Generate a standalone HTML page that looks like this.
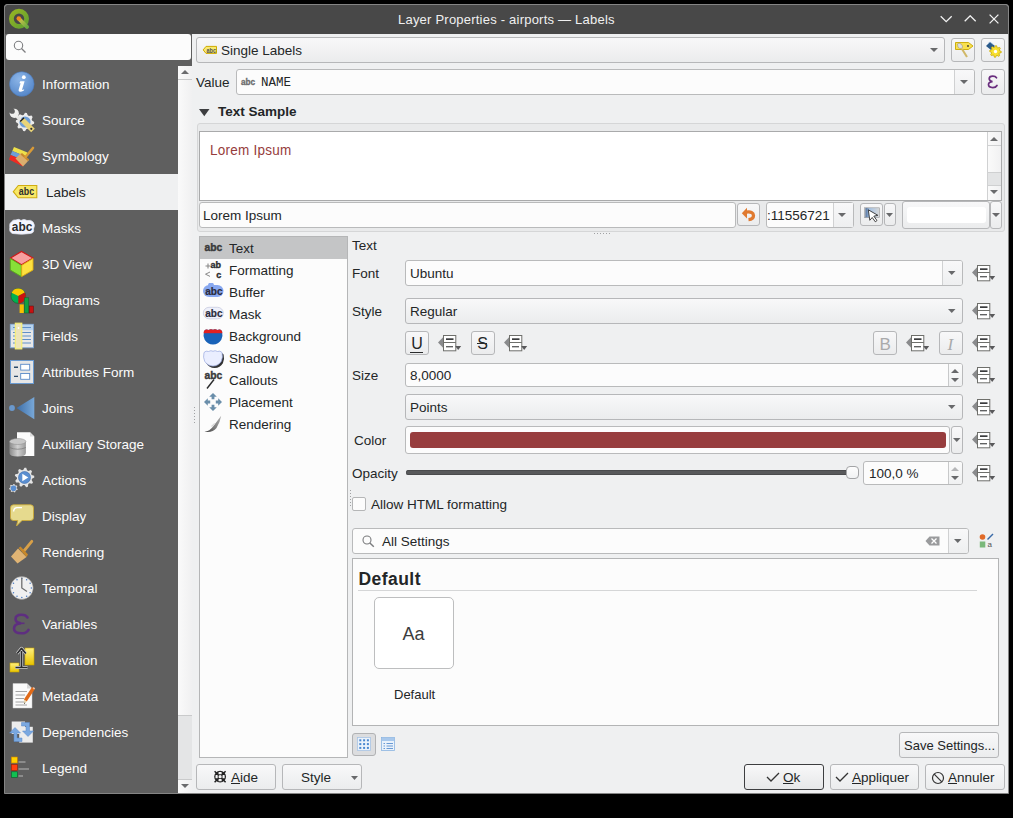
<!DOCTYPE html>
<html><head><meta charset="utf-8">
<style>
*{box-sizing:border-box;margin:0;padding:0}
html,body{width:1013px;height:818px;overflow:hidden;background:#000}
body{position:relative;font-family:"Liberation Sans",sans-serif;color:#232627}
.a{position:absolute}
.t{position:absolute;white-space:nowrap}
svg{display:block}
</style></head><body>
<div class="a" style="left:4px;top:4px;width:1005px;height:790px;background:#eff0f1;border:1px solid #858585;border-radius:3px 3px 0 0"></div>
<div class="a" style="left:5px;top:5px;width:1003px;height:29px;background:#484848;border-radius:2px 2px 0 0"></div>
<div class="t " style="left:398px;top:11.50px;font-size:13.00px;line-height:16px;color:#f0f0f0;font-weight:normal;letter-spacing:0.22px">Layer Properties - airports — Labels</div>
<svg class="a" style="left:940px;top:15px" width="13" height="8" viewBox="0 0 13 8"><path d="M0.7 1.2L6.2 6.7L11.7 1.2" fill="none" stroke="#f2f2f2" stroke-width="1.3"/></svg>
<svg class="a" style="left:964px;top:15px" width="13" height="8" viewBox="0 0 13 8"><path d="M0.7 6.3L6.2 0.8L11.7 6.3" fill="none" stroke="#f2f2f2" stroke-width="1.3"/></svg>
<svg class="a" style="left:989px;top:14px" width="10" height="10" viewBox="0 0 10 10"><path d="M0.6 0.6L9.4 9.4M9.4 0.6L0.6 9.4" fill="none" stroke="#f2f2f2" stroke-width="1.3"/></svg>
<svg class="a" style="left:8px;top:8px" width="22" height="22" viewBox="0 0 22 22"><defs><linearGradient id="gq" x1="0" y1="0" x2="1" y2="1"><stop offset="0" stop-color="#95b524"/><stop offset="1" stop-color="#62a030"/></linearGradient><linearGradient id="gt" x1="0" y1="0" x2="1" y2="1"><stop offset="0" stop-color="#c8c048"/><stop offset="1" stop-color="#6aaa40"/></linearGradient></defs><circle cx="11" cy="10.7" r="7.6" fill="none" stroke="url(#gq)" stroke-width="4.8"/><path d="M12 11.8L19 18.8" stroke="url(#gt)" stroke-width="4" stroke-linecap="round"/><circle cx="10.8" cy="10.5" r="2.3" fill="#f08a20"/></svg>
<div class="a" style="left:5px;top:34px;width:173px;height:759px;background:#5f5f5f"></div>
<div class="a" style="left:178px;top:34px;width:14px;height:32px;background:#5f5f5f"></div>
<div class="a" style="left:6px;top:34px;width:185px;height:26px;background:#fcfcfc;border-radius:3px"></div>
<svg class="a" style="left:13px;top:40px" width="14" height="14" viewBox="0 0 14 14"><circle cx="5.5" cy="5.5" r="4.2" fill="none" stroke="#7d7e80" stroke-width="1.1"/><path d="M8.5 8.5L12.5 12.5" stroke="#7d7e80" stroke-width="1.3"/></svg>
<div class="a" style="left:178px;top:66px;width:14px;height:727px;background:linear-gradient(90deg,#fafafa,#f0f0f1)"></div>
<svg class="a" style="left:181px;top:70px" width="8" height="4" viewBox="0 0 8 4"><path d="M0 4H8L4.0 0Z" fill="#6a6b6d"/></svg>
<div class="a" style="left:178px;top:79px;width:14px;height:1px;background:#c8c9ca"></div>
<div class="a" style="left:178px;top:715px;width:14px;height:65px;background:#e4e5e6;border-top:1px solid #c9cacb;border-bottom:1px solid #c9cacb"></div>
<svg class="a" style="left:181px;top:784px" width="8" height="4" viewBox="0 0 8 4"><path d="M0 0H8L4.0 4Z" fill="#6a6b6d"/></svg>
<div class="t " style="left:42px;top:75.82px;font-size:13.50px;line-height:17px;color:#fcfcfc;font-weight:normal;">Information</div>
<div class="t " style="left:42px;top:111.82px;font-size:13.50px;line-height:17px;color:#fcfcfc;font-weight:normal;">Source</div>
<div class="t " style="left:42px;top:147.82px;font-size:13.50px;line-height:17px;color:#fcfcfc;font-weight:normal;">Symbology</div>
<div class="a" style="left:5px;top:174px;width:173px;height:36px;background:#eff0f1"></div>
<div class="t " style="left:46px;top:183.82px;font-size:13.50px;line-height:17px;color:#232627;font-weight:normal;">Labels</div>
<div class="t " style="left:42px;top:219.82px;font-size:13.50px;line-height:17px;color:#fcfcfc;font-weight:normal;">Masks</div>
<div class="t " style="left:42px;top:255.82px;font-size:13.50px;line-height:17px;color:#fcfcfc;font-weight:normal;">3D View</div>
<div class="t " style="left:42px;top:291.82px;font-size:13.50px;line-height:17px;color:#fcfcfc;font-weight:normal;">Diagrams</div>
<div class="t " style="left:42px;top:327.82px;font-size:13.50px;line-height:17px;color:#fcfcfc;font-weight:normal;">Fields</div>
<div class="t " style="left:42px;top:363.82px;font-size:13.50px;line-height:17px;color:#fcfcfc;font-weight:normal;">Attributes Form</div>
<div class="t " style="left:42px;top:399.82px;font-size:13.50px;line-height:17px;color:#fcfcfc;font-weight:normal;">Joins</div>
<div class="t " style="left:42px;top:435.82px;font-size:13.50px;line-height:17px;color:#fcfcfc;font-weight:normal;">Auxiliary Storage</div>
<div class="t " style="left:42px;top:471.82px;font-size:13.50px;line-height:17px;color:#fcfcfc;font-weight:normal;">Actions</div>
<div class="t " style="left:42px;top:507.82px;font-size:13.50px;line-height:17px;color:#fcfcfc;font-weight:normal;">Display</div>
<div class="t " style="left:42px;top:543.82px;font-size:13.50px;line-height:17px;color:#fcfcfc;font-weight:normal;">Rendering</div>
<div class="t " style="left:42px;top:579.82px;font-size:13.50px;line-height:17px;color:#fcfcfc;font-weight:normal;">Temporal</div>
<div class="t " style="left:42px;top:615.82px;font-size:13.50px;line-height:17px;color:#fcfcfc;font-weight:normal;">Variables</div>
<div class="t " style="left:42px;top:651.82px;font-size:13.50px;line-height:17px;color:#fcfcfc;font-weight:normal;">Elevation</div>
<div class="t " style="left:42px;top:687.82px;font-size:13.50px;line-height:17px;color:#fcfcfc;font-weight:normal;">Metadata</div>
<div class="t " style="left:42px;top:723.82px;font-size:13.50px;line-height:17px;color:#fcfcfc;font-weight:normal;">Dependencies</div>
<div class="t " style="left:42px;top:759.82px;font-size:13.50px;line-height:17px;color:#fcfcfc;font-weight:normal;">Legend</div>
<div class="a" style="left:196px;top:37px;width:749px;height:26px;border:1px solid #b6b7b9;border-radius:3px;background:linear-gradient(#f8f8f9,#ebeced);"></div>
<div class="t " style="left:221px;top:41.82px;font-size:13.50px;line-height:17px;color:#232627;font-weight:normal;">Single Labels</div>
<svg class="a" style="left:202px;top:45px" width="17" height="11" viewBox="202 45 17 11"><path d="M206 46.4H216.5V53.4H206L203.2 49.9Z" fill="#f8ea70" stroke="#d0aa00" stroke-width="1"/><text x="206.5" y="52.6" font-family="Liberation Sans" font-weight="bold" font-size="7" textLength="9.5" lengthAdjust="spacingAndGlyphs" fill="#555">abc</text></svg>
<svg class="a" style="left:930px;top:48px" width="8" height="4" viewBox="0 0 8 4"><path d="M0 0H8L4.0 4Z" fill="#68696b"/></svg>
<div class="a" style="left:951px;top:38px;width:24px;height:24px;border:1px solid #b6b7b9;border-radius:3px;background:linear-gradient(#f8f8f9,#ebeced);"></div>
<div class="a" style="left:981px;top:38px;width:24px;height:24px;border:1px solid #b6b7b9;border-radius:3px;background:linear-gradient(#f8f8f9,#ebeced);"></div>
<div class="t " style="left:196px;top:73.82px;font-size:13.50px;line-height:17px;color:#232627;font-weight:normal;">Value</div>
<div class="a" style="left:236px;top:69px;width:739px;height:26px;border:1px solid #b9babb;border-radius:3px;background:#fcfcfc;"></div>
<div class="a" style="left:954px;top:70px;width:1px;height:24px;background:#d0d1d2"></div>
<div class="a" style="left:955px;top:70px;width:19px;height:24px;background:linear-gradient(#f8f8f9,#eeeff0);border-radius:0 2px 2px 0"></div>
<svg class="a" style="left:960px;top:80px" width="8" height="4" viewBox="0 0 8 4"><path d="M0 0H8L4.0 4Z" fill="#68696b"/></svg>
<div class="a" style="left:981px;top:69px;width:24px;height:26px;border:1px solid #b6b7b9;border-radius:3px;background:linear-gradient(#f8f8f9,#ebeced);"></div>
<svg class="a" style="left:240px;top:77px" width="18" height="10" viewBox="240 77 18 10"><text x="241" y="85.2" font-family="Liberation Sans" font-weight="bold" font-size="9.5" textLength="14.2" lengthAdjust="spacingAndGlyphs" fill="#6b6c6d" stroke="#6b6c6d" stroke-width="0.35">abc</text></svg>
<div class="t " style="left:261px;top:74.67px;font-size:12.50px;line-height:16px;color:#232627;font-weight:normal;font-family:'Liberation Mono',monospace">NAME</div>
<svg class="a" style="left:199px;top:109px" width="11" height="8" viewBox="0 0 11 8"><path d="M0 0H10.5L5.25 7.3Z" fill="#3d3e40"/></svg>
<div class="t " style="left:218px;top:102.82px;font-size:13.50px;line-height:17px;color:#232627;font-weight:bold;">Text Sample</div>
<div class="a" style="left:197px;top:123px;width:808px;height:109px;border:1px solid #d5d6d7;border-radius:3px;background:#e9eaeb"></div>
<div class="a" style="left:199px;top:131px;width:803px;height:70px;background:#fff;border:1px solid #a9aaab"></div>
<div class="t " style="left:210px;top:140.55px;font-size:14.58px;line-height:18px;color:#963c3c;font-weight:normal;transform:scaleX(0.9259);transform-origin:0 0;letter-spacing:0.28px">Lorem Ipsum</div>
<div class="a" style="left:987px;top:132px;width:14px;height:68px;background:linear-gradient(90deg,#fafafa,#f1f1f2);border-left:1px solid #d0d1d2"></div>
<svg class="a" style="left:990px;top:137px" width="8" height="4" viewBox="0 0 8 4"><path d="M0 4H8L4.0 0Z" fill="#6a6b6d"/></svg>
<div class="a" style="left:987px;top:145px;width:14px;height:1px;background:#cfd0d1"></div>
<div class="a" style="left:988px;top:172px;width:13px;height:14px;background:#e3e4e5;border-top:1px solid #cfd0d1;border-bottom:1px solid #cfd0d1"></div>
<svg class="a" style="left:990px;top:190px" width="8" height="4" viewBox="0 0 8 4"><path d="M0 0H8L4.0 4Z" fill="#6a6b6d"/></svg>
<div class="a" style="left:199px;top:202px;width:537px;height:26px;border:1px solid #b9babb;border-radius:3px;background:#fcfcfc;"></div>
<div class="t " style="left:203px;top:206.82px;font-size:13.50px;line-height:17px;color:#232627;font-weight:normal;">Lorem Ipsum</div>
<div class="a" style="left:737px;top:203px;width:23px;height:23px;border:1px solid #b6b7b9;border-radius:3px;background:linear-gradient(#f8f8f9,#ebeced);"></div>
<div class="a" style="left:766px;top:202px;width:88px;height:26px;border:1px solid #b9babb;border-radius:3px;background:#fcfcfc;"></div>
<div class="a" style="left:833px;top:203px;width:1px;height:24px;background:#d0d1d2"></div>
<div class="a" style="left:834px;top:203px;width:19px;height:24px;background:linear-gradient(#f8f8f9,#eeeff0)"></div>
<svg class="a" style="left:838px;top:213px" width="8" height="4" viewBox="0 0 8 4"><path d="M0 0H8L4.0 4Z" fill="#68696b"/></svg>
<div class="t " style="left:767px;top:206.82px;font-size:13.50px;line-height:17px;color:#232627;font-weight:normal;">:11556721</div>
<div class="a" style="left:860px;top:203px;width:23px;height:23px;border:1px solid #b6b7b9;border-radius:3px;background:linear-gradient(#f8f8f9,#ebeced);"></div>
<div class="a" style="left:884px;top:203px;width:12px;height:23px;border:1px solid #b6b7b9;border-radius:3px;background:linear-gradient(#f8f8f9,#ebeced);"></div>
<svg class="a" style="left:886px;top:213px" width="7" height="4" viewBox="0 0 7 4"><path d="M0 0H7L3.5 4Z" fill="#68696b"/></svg>
<div class="a" style="left:902px;top:201px;width:88px;height:28px;border:1px solid #b6b7b9;border-radius:3px;background:linear-gradient(#f8f8f9,#ebeced);"></div>
<div class="a" style="left:907px;top:207px;width:79px;height:16px;background:#fff;border-radius:3px"></div>
<div class="a" style="left:990px;top:201px;width:12px;height:28px;border:1px solid #b6b7b9;border-radius:3px;background:linear-gradient(#f8f8f9,#ebeced);"></div>
<svg class="a" style="left:992px;top:213px" width="8" height="4" viewBox="0 0 8 4"><path d="M0 0H8L4.0 4Z" fill="#68696b"/></svg>
<div class="a" style="left:199px;top:236px;width:149px;height:522px;background:#fcfcfc;border:1px solid #b5b6b7"></div>
<div class="a" style="left:200px;top:237px;width:147px;height:22px;background:#c4c5c6"></div>
<div class="t " style="left:229px;top:239.82px;font-size:13.50px;line-height:17px;color:#232627;font-weight:normal;">Text</div>
<div class="t " style="left:229px;top:261.82px;font-size:13.50px;line-height:17px;color:#232627;font-weight:normal;">Formatting</div>
<div class="t " style="left:229px;top:283.82px;font-size:13.50px;line-height:17px;color:#232627;font-weight:normal;">Buffer</div>
<div class="t " style="left:229px;top:305.82px;font-size:13.50px;line-height:17px;color:#232627;font-weight:normal;">Mask</div>
<div class="t " style="left:229px;top:327.82px;font-size:13.50px;line-height:17px;color:#232627;font-weight:normal;">Background</div>
<div class="t " style="left:229px;top:349.82px;font-size:13.50px;line-height:17px;color:#232627;font-weight:normal;">Shadow</div>
<div class="t " style="left:229px;top:371.82px;font-size:13.50px;line-height:17px;color:#232627;font-weight:normal;">Callouts</div>
<div class="t " style="left:229px;top:393.82px;font-size:13.50px;line-height:17px;color:#232627;font-weight:normal;">Placement</div>
<div class="t " style="left:229px;top:415.82px;font-size:13.50px;line-height:17px;color:#232627;font-weight:normal;">Rendering</div>
<div class="t " style="left:352px;top:236.82px;font-size:13.50px;line-height:17px;color:#232627;font-weight:normal;">Text</div>
<div class="t " style="left:352px;top:264.82px;font-size:13.50px;line-height:17px;color:#232627;font-weight:normal;">Font</div>
<div class="a" style="left:405px;top:260px;width:558px;height:26px;border:1px solid #b9babb;border-radius:3px;background:#fcfcfc;"></div>
<div class="a" style="left:942px;top:261px;width:1px;height:24px;background:#d0d1d2"></div>
<div class="a" style="left:943px;top:261px;width:19px;height:24px;background:linear-gradient(#f8f8f9,#eeeff0);border-radius:0 2px 2px 0"></div>
<svg class="a" style="left:948px;top:271px" width="7.5" height="4" viewBox="0 0 7.5 4"><path d="M0 0H7.5L3.75 4Z" fill="#68696b"/></svg>
<div class="t " style="left:410px;top:264.82px;font-size:13.50px;line-height:17px;color:#232627;font-weight:normal;">Ubuntu</div>
<svg class="a" style="left:972px;top:265px" width="24" height="17" viewBox="0 0 24 17"><path d="M0 7.5L5.5 1.8V13.2Z" fill="#8a8b8d"/><rect x="5.5" y="0.5" width="12.3" height="15.3" fill="#fff" stroke="#6e6f6b"/><path d="M5.5 7.5H17.8" stroke="#6e6f6b"/><rect x="8" y="3.3" width="7.5" height="1.7" fill="#3b3c3e"/><rect x="8" y="11.2" width="7" height="1.1" fill="#3b3c3e"/><path d="M17.2 11H23.2L20.2 15Z" fill="#59595b"/></svg>
<div class="t " style="left:352px;top:302.82px;font-size:13.50px;line-height:17px;color:#232627;font-weight:normal;">Style</div>
<div class="a" style="left:405px;top:298px;width:558px;height:26px;border:1px solid #b6b7b9;border-radius:3px;background:linear-gradient(#f8f8f9,#ebeced);"></div>
<div class="t " style="left:410px;top:302.82px;font-size:13.50px;line-height:17px;color:#232627;font-weight:normal;">Regular</div>
<svg class="a" style="left:948px;top:309px" width="7.5" height="4" viewBox="0 0 7.5 4"><path d="M0 0H7.5L3.75 4Z" fill="#68696b"/></svg>
<svg class="a" style="left:972px;top:303px" width="24" height="17" viewBox="0 0 24 17"><path d="M0 7.5L5.5 1.8V13.2Z" fill="#8a8b8d"/><rect x="5.5" y="0.5" width="12.3" height="15.3" fill="#fff" stroke="#6e6f6b"/><path d="M5.5 7.5H17.8" stroke="#6e6f6b"/><rect x="8" y="3.3" width="7.5" height="1.7" fill="#3b3c3e"/><rect x="8" y="11.2" width="7" height="1.1" fill="#3b3c3e"/><path d="M17.2 11H23.2L20.2 15Z" fill="#59595b"/></svg>
<div class="a" style="left:405px;top:331px;width:24px;height:24px;border:1px solid #b6b7b9;border-radius:3px;background:linear-gradient(#f8f8f9,#ebeced);"></div>
<div class="t " style="left:411.3px;top:333.96px;font-size:16.00px;line-height:20px;color:#232627;font-weight:normal;">U</div>
<div class="a" style="left:410px;top:351.6px;width:13px;height:1.2px;background:#2a2b2c"></div>
<svg class="a" style="left:438px;top:335px" width="24" height="17" viewBox="0 0 24 17"><path d="M0 7.5L5.5 1.8V13.2Z" fill="#8a8b8d"/><rect x="5.5" y="0.5" width="12.3" height="15.3" fill="#fff" stroke="#6e6f6b"/><path d="M5.5 7.5H17.8" stroke="#6e6f6b"/><rect x="8" y="3.3" width="7.5" height="1.7" fill="#3b3c3e"/><rect x="8" y="11.2" width="7" height="1.1" fill="#3b3c3e"/><path d="M17.2 11H23.2L20.2 15Z" fill="#59595b"/></svg>
<div class="a" style="left:471px;top:331px;width:24px;height:24px;border:1px solid #b6b7b9;border-radius:3px;background:linear-gradient(#f8f8f9,#ebeced);"></div>
<div class="t " style="left:477.3px;top:333.96px;font-size:16.00px;line-height:20px;color:#232627;font-weight:normal;">S</div>
<div class="a" style="left:477px;top:343.2px;width:10px;height:1.1px;background:#2a2b2c"></div>
<svg class="a" style="left:504px;top:335px" width="24" height="17" viewBox="0 0 24 17"><path d="M0 7.5L5.5 1.8V13.2Z" fill="#8a8b8d"/><rect x="5.5" y="0.5" width="12.3" height="15.3" fill="#fff" stroke="#6e6f6b"/><path d="M5.5 7.5H17.8" stroke="#6e6f6b"/><rect x="8" y="3.3" width="7.5" height="1.7" fill="#3b3c3e"/><rect x="8" y="11.2" width="7" height="1.1" fill="#3b3c3e"/><path d="M17.2 11H23.2L20.2 15Z" fill="#59595b"/></svg>
<div class="a" style="left:873px;top:331px;width:24px;height:24px;border:1px solid #b6b7b9;border-radius:3px;background:linear-gradient(#f8f8f9,#ebeced);"></div>
<div class="t " style="left:879.5px;top:333.61px;font-size:17.00px;line-height:21px;color:#a9aaab;font-weight:normal;">B</div>
<svg class="a" style="left:906px;top:335px" width="24" height="17" viewBox="0 0 24 17"><path d="M0 7.5L5.5 1.8V13.2Z" fill="#8a8b8d"/><rect x="5.5" y="0.5" width="12.3" height="15.3" fill="#fff" stroke="#6e6f6b"/><path d="M5.5 7.5H17.8" stroke="#6e6f6b"/><rect x="8" y="3.3" width="7.5" height="1.7" fill="#3b3c3e"/><rect x="8" y="11.2" width="7" height="1.1" fill="#3b3c3e"/><path d="M17.2 11H23.2L20.2 15Z" fill="#59595b"/></svg>
<div class="a" style="left:939px;top:331px;width:24px;height:24px;border:1px solid #b6b7b9;border-radius:3px;background:linear-gradient(#f8f8f9,#ebeced);"></div>
<div class="t " style="left:947.5px;top:333.61px;font-size:17.00px;line-height:21px;color:#a9aaab;font-weight:normal;font-family:'Liberation Serif',serif;font-style:italic">I</div>
<svg class="a" style="left:972px;top:335px" width="24" height="17" viewBox="0 0 24 17"><path d="M0 7.5L5.5 1.8V13.2Z" fill="#8a8b8d"/><rect x="5.5" y="0.5" width="12.3" height="15.3" fill="#fff" stroke="#6e6f6b"/><path d="M5.5 7.5H17.8" stroke="#6e6f6b"/><rect x="8" y="3.3" width="7.5" height="1.7" fill="#3b3c3e"/><rect x="8" y="11.2" width="7" height="1.1" fill="#3b3c3e"/><path d="M17.2 11H23.2L20.2 15Z" fill="#59595b"/></svg>
<div class="t " style="left:352px;top:366.82px;font-size:13.50px;line-height:17px;color:#232627;font-weight:normal;">Size</div>
<div class="a" style="left:405px;top:363px;width:558px;height:24px;border:1px solid #b9babb;border-radius:3px;background:#fcfcfc;"></div>
<div class="t " style="left:410px;top:366.82px;font-size:13.50px;line-height:17px;color:#232627;font-weight:normal;">8,0000</div>
<div class="a" style="left:948px;top:364px;width:1px;height:22px;background:#c8c9ca"></div>
<div class="a" style="left:949px;top:364px;width:13px;height:22px;background:linear-gradient(#fbfbfb,#f0f1f2);border-radius:0 2px 2px 0"></div>
<svg class="a" style="left:951px;top:369px" width="8" height="4" viewBox="0 0 8 4"><path d="M0 4H8L4.0 0Z" fill="#68696b"/></svg>
<svg class="a" style="left:951px;top:378px" width="8" height="4" viewBox="0 0 8 4"><path d="M0 0H8L4.0 4Z" fill="#68696b"/></svg>
<svg class="a" style="left:972px;top:367px" width="24" height="17" viewBox="0 0 24 17"><path d="M0 7.5L5.5 1.8V13.2Z" fill="#8a8b8d"/><rect x="5.5" y="0.5" width="12.3" height="15.3" fill="#fff" stroke="#6e6f6b"/><path d="M5.5 7.5H17.8" stroke="#6e6f6b"/><rect x="8" y="3.3" width="7.5" height="1.7" fill="#3b3c3e"/><rect x="8" y="11.2" width="7" height="1.1" fill="#3b3c3e"/><path d="M17.2 11H23.2L20.2 15Z" fill="#59595b"/></svg>
<div class="a" style="left:405px;top:394px;width:558px;height:26px;border:1px solid #b6b7b9;border-radius:3px;background:linear-gradient(#f8f8f9,#ebeced);"></div>
<div class="t " style="left:410px;top:398.82px;font-size:13.50px;line-height:17px;color:#232627;font-weight:normal;">Points</div>
<svg class="a" style="left:948px;top:405px" width="7.5" height="4" viewBox="0 0 7.5 4"><path d="M0 0H7.5L3.75 4Z" fill="#68696b"/></svg>
<svg class="a" style="left:972px;top:399px" width="24" height="17" viewBox="0 0 24 17"><path d="M0 7.5L5.5 1.8V13.2Z" fill="#8a8b8d"/><rect x="5.5" y="0.5" width="12.3" height="15.3" fill="#fff" stroke="#6e6f6b"/><path d="M5.5 7.5H17.8" stroke="#6e6f6b"/><rect x="8" y="3.3" width="7.5" height="1.7" fill="#3b3c3e"/><rect x="8" y="11.2" width="7" height="1.1" fill="#3b3c3e"/><path d="M17.2 11H23.2L20.2 15Z" fill="#59595b"/></svg>
<div class="t " style="left:354px;top:431.82px;font-size:13.50px;line-height:17px;color:#232627;font-weight:normal;">Color</div>
<div class="a" style="left:405px;top:426px;width:545px;height:28px;border:1px solid #b9babb;border-radius:3px;background:#fcfcfc;"></div>
<div class="a" style="left:410px;top:432px;width:536px;height:16px;background:#973d3e;border-radius:3px"></div>
<div class="a" style="left:951px;top:426px;width:12px;height:28px;border:1px solid #b6b7b9;border-radius:3px;background:linear-gradient(#f8f8f9,#ebeced);"></div>
<svg class="a" style="left:953px;top:438px" width="7.5" height="4" viewBox="0 0 7.5 4"><path d="M0 0H7.5L3.75 4Z" fill="#68696b"/></svg>
<svg class="a" style="left:972px;top:432px" width="24" height="17" viewBox="0 0 24 17"><path d="M0 7.5L5.5 1.8V13.2Z" fill="#8a8b8d"/><rect x="5.5" y="0.5" width="12.3" height="15.3" fill="#fff" stroke="#6e6f6b"/><path d="M5.5 7.5H17.8" stroke="#6e6f6b"/><rect x="8" y="3.3" width="7.5" height="1.7" fill="#3b3c3e"/><rect x="8" y="11.2" width="7" height="1.1" fill="#3b3c3e"/><path d="M17.2 11H23.2L20.2 15Z" fill="#59595b"/></svg>
<div class="t " style="left:352px;top:464.82px;font-size:13.50px;line-height:17px;color:#232627;font-weight:normal;">Opacity</div>
<div class="a" style="left:406px;top:470px;width:442px;height:5px;background:#58595b;border-radius:3px;box-shadow:inset 0 1px 0 #4a4b4d, inset 0 -1px 0 #4a4b4d"></div>
<div class="a" style="left:846px;top:466px;width:13px;height:13px;background:linear-gradient(#fdfdfd,#f1f2f3);border:1px solid #a3a4a6;border-radius:4px"></div>
<div class="a" style="left:863px;top:461px;width:100px;height:24px;border:1px solid #b9babb;border-radius:3px;background:#fcfcfc;"></div>
<div class="t " style="left:869px;top:464.82px;font-size:13.50px;line-height:17px;color:#232627;font-weight:normal;">100,0 %</div>
<div class="a" style="left:948px;top:462px;width:1px;height:22px;background:#c8c9ca"></div>
<div class="a" style="left:949px;top:462px;width:13px;height:22px;background:linear-gradient(#fbfbfb,#f0f1f2);border-radius:0 2px 2px 0"></div>
<svg class="a" style="left:951px;top:467px" width="8" height="4" viewBox="0 0 8 4"><path d="M0 4H8L4.0 0Z" fill="#b5b6b8"/></svg>
<svg class="a" style="left:951px;top:476px" width="8" height="4" viewBox="0 0 8 4"><path d="M0 0H8L4.0 4Z" fill="#68696b"/></svg>
<svg class="a" style="left:972px;top:465px" width="24" height="17" viewBox="0 0 24 17"><path d="M0 7.5L5.5 1.8V13.2Z" fill="#8a8b8d"/><rect x="5.5" y="0.5" width="12.3" height="15.3" fill="#fff" stroke="#6e6f6b"/><path d="M5.5 7.5H17.8" stroke="#6e6f6b"/><rect x="8" y="3.3" width="7.5" height="1.7" fill="#3b3c3e"/><rect x="8" y="11.2" width="7" height="1.1" fill="#3b3c3e"/><path d="M17.2 11H23.2L20.2 15Z" fill="#59595b"/></svg>
<div class="a" style="left:594px;top:233px;width:1px;height:1px;background:#a0a1a3"></div>
<div class="a" style="left:597px;top:233px;width:1px;height:1px;background:#a0a1a3"></div>
<div class="a" style="left:600px;top:233px;width:1px;height:1px;background:#a0a1a3"></div>
<div class="a" style="left:603px;top:233px;width:1px;height:1px;background:#a0a1a3"></div>
<div class="a" style="left:606px;top:233px;width:1px;height:1px;background:#a0a1a3"></div>
<div class="a" style="left:609px;top:233px;width:1px;height:1px;background:#a0a1a3"></div>
<div class="a" style="left:350px;top:490px;width:1px;height:1px;background:#a0a1a3"></div>
<div class="a" style="left:350px;top:493px;width:1px;height:1px;background:#a0a1a3"></div>
<div class="a" style="left:350px;top:496px;width:1px;height:1px;background:#a0a1a3"></div>
<div class="a" style="left:350px;top:499px;width:1px;height:1px;background:#a0a1a3"></div>
<div class="a" style="left:350px;top:502px;width:1px;height:1px;background:#a0a1a3"></div>
<div class="a" style="left:350px;top:505px;width:1px;height:1px;background:#a0a1a3"></div>
<div class="a" style="left:194px;top:407px;width:1px;height:1px;background:#a0a1a3"></div>
<div class="a" style="left:194px;top:410px;width:1px;height:1px;background:#a0a1a3"></div>
<div class="a" style="left:194px;top:413px;width:1px;height:1px;background:#a0a1a3"></div>
<div class="a" style="left:194px;top:416px;width:1px;height:1px;background:#a0a1a3"></div>
<div class="a" style="left:194px;top:419px;width:1px;height:1px;background:#a0a1a3"></div>
<div class="a" style="left:194px;top:422px;width:1px;height:1px;background:#a0a1a3"></div>
<div class="a" style="left:352px;top:497px;width:14px;height:14px;background:#fcfcfc;border:1px solid #b5b6b7;border-radius:2px"></div>
<div class="t " style="left:371px;top:495.82px;font-size:13.50px;line-height:17px;color:#232627;font-weight:normal;">Allow HTML formatting</div>
<div class="a" style="left:352px;top:528px;width:617px;height:26px;border:1px solid #b9babb;border-radius:3px;background:#fcfcfc;"></div>
<div class="a" style="left:948px;top:529px;width:1px;height:24px;background:#d0d1d2"></div>
<div class="a" style="left:949px;top:529px;width:19px;height:24px;background:linear-gradient(#f8f8f9,#eeeff0);border-radius:0 2px 2px 0"></div>
<svg class="a" style="left:954px;top:539px" width="7.5" height="4" viewBox="0 0 7.5 4"><path d="M0 0H7.5L3.75 4Z" fill="#68696b"/></svg>
<svg class="a" style="left:362px;top:535px" width="13" height="13" viewBox="0 0 13 13"><circle cx="5" cy="5" r="4" fill="none" stroke="#7a7b7d" stroke-width="1.1"/><path d="M7.9 7.9L11.8 11.8" stroke="#7a7b7d" stroke-width="1.4"/></svg>
<div class="t " style="left:382px;top:532.82px;font-size:13.50px;line-height:17px;color:#232627;font-weight:normal;">All Settings</div>
<div class="a" style="left:352px;top:558px;width:647px;height:168px;background:#fcfcfc;border:1px solid #b3b4b5"></div>
<div class="t " style="left:358.5px;top:567.94px;font-size:17.50px;line-height:22px;color:#232627;font-weight:bold;letter-spacing:0.45px">Default</div>
<div class="a" style="left:358px;top:590px;width:619px;height:1px;background:#d5d6d7"></div>
<div class="a" style="left:374px;top:597px;width:80px;height:72px;background:#fff;border:1px solid #bdbebf;border-radius:5px"></div>
<div class="t " style="left:402.5px;top:622.76px;font-size:18.00px;line-height:22px;color:#3c3d3e;font-weight:normal;">Aa</div>
<div class="t " style="left:394px;top:686.50px;font-size:13.00px;line-height:16px;color:#232627;font-weight:normal;">Default</div>
<div class="a" style="left:352px;top:733px;width:24px;height:23px;background:#dcdddf;border:1px solid #b1b2b4;border-radius:3px"></div>
<div class="a" style="left:899px;top:732px;width:100px;height:26px;border:1px solid #b6b7b9;border-radius:3px;background:linear-gradient(#f8f8f9,#ebeced);"></div>
<div class="t " style="left:904px;top:737.50px;font-size:13.00px;line-height:16px;color:#232627;font-weight:normal;">Save Settings...</div>
<div class="a" style="left:196px;top:764px;width:80px;height:26px;border:1px solid #b6b7b9;border-radius:3px;background:linear-gradient(#f8f8f9,#ebeced);"></div>
<div class="t " style="left:231px;top:768.82px;font-size:13.50px;line-height:17px;color:#232627;font-weight:normal;"><u>A</u>ide</div>
<div class="a" style="left:282px;top:764px;width:80px;height:26px;border:1px solid #b6b7b9;border-radius:3px;background:linear-gradient(#f8f8f9,#ebeced);"></div>
<div class="t " style="left:301px;top:768.82px;font-size:13.50px;line-height:17px;color:#232627;font-weight:normal;">Style</div>
<svg class="a" style="left:351px;top:776px" width="7" height="4" viewBox="0 0 7 4"><path d="M0 0H7L3.5 4Z" fill="#68696b"/></svg>
<div class="a" style="left:744px;top:764px;width:80px;height:26px;border:1px solid #3d3e40;border-radius:3px;background:linear-gradient(#f8f8f9,#e6e7e8)"></div>
<div class="t " style="left:783px;top:768.82px;font-size:13.50px;line-height:17px;color:#232627;font-weight:normal;"><u>O</u>k</div>
<div class="a" style="left:830px;top:764px;width:89px;height:26px;border:1px solid #b6b7b9;border-radius:3px;background:linear-gradient(#f8f8f9,#ebeced);"></div>
<div class="t " style="left:852px;top:768.82px;font-size:13.50px;line-height:17px;color:#232627;font-weight:normal;"><u>A</u>ppliquer</div>
<div class="a" style="left:925px;top:764px;width:80px;height:26px;border:1px solid #b6b7b9;border-radius:3px;background:linear-gradient(#f8f8f9,#ebeced);"></div>
<div class="t " style="left:948px;top:768.82px;font-size:13.50px;line-height:17px;color:#232627;font-weight:normal;"><u>A</u>nnuler</div>
<svg class="a" style="left:8px;top:70px" width="28" height="28" viewBox="8 70 28 28"><defs><radialGradient id="gi" cx="0.4" cy="0.3" r="0.8"><stop offset="0" stop-color="#8db6e8"/><stop offset="1" stop-color="#4f82c6"/></radialGradient></defs><circle cx="21.8" cy="84" r="12.3" fill="url(#gi)" stroke="#4b79b8" stroke-width="0.6"/><circle cx="23.8" cy="77.2" r="1.9" fill="#fff"/><path d="M20.3 81.2H24.6L22.2 89.2Q22 90.2 23 89.8L24.2 89.2L23.9 90.5Q21.5 92 19.8 91.8Q18 91.5 18.7 89.5L20.6 83.2L19.4 83.3Z" fill="#fff"/></svg>
<svg class="a" style="left:8px;top:106px" width="28" height="28" viewBox="8 106 28 28"><path d="M25.00 112.80L26.79 112.98L27.76 115.35L29.00 116.01L31.51 115.49L32.65 116.89L31.65 119.24L32.06 120.60L34.20 122.00L34.02 123.79L31.65 124.76L30.99 126.00L31.51 128.51L30.11 129.65L27.76 128.65L26.40 129.06L25.00 131.20L23.21 131.02L22.24 128.65L21.00 127.99L18.49 128.51L17.35 127.11L18.35 124.76L17.94 123.40L15.80 122.00L15.98 120.21L18.35 119.24L19.01 118.00L18.49 115.49L19.89 114.35L22.24 115.35L23.60 114.94Z" fill="#ececec"/><circle cx="25" cy="122" r="5.6" fill="#6f9fd8"/><path d="M15.5 115L21.5 121" stroke="#e6e6e4" stroke-width="3.2"/><circle cx="14.3" cy="113.3" r="4.6" fill="#eeeeec"/><circle cx="12.2" cy="111.2" r="2.6" fill="#5f5f5f"/><path d="M22 119.5L33 130.5" stroke="#e9d478" stroke-width="5.2" stroke-linecap="butt"/><path d="M20.2 121.5L24 117.7" stroke="#1a1a1a" stroke-width="1.4"/><circle cx="31.3" cy="128.8" r="1.1" fill="#333"/></svg>
<svg class="a" style="left:8px;top:144px" width="28" height="26" viewBox="8 144 28 26"><path d="M14 147L27.5 152.5L26 156.5L12.3 151Z" fill="#eee04a"/><path d="M12.3 151L26 156.5L24.5 160.5L10.6 155Z" fill="#6f9fd6"/><path d="M10.6 155L24.5 160.5L23 166.5L9 159.5Z" fill="#ee2a22"/><path d="M21 153L29 160L23 166.5L15.5 158.5Z" fill="#dcae6e"/><path d="M20.5 154.5L22 153L29.2 159.6L27.8 161Z" fill="#c8882a"/><path d="M25.5 157L33 148" stroke="#d89a38" stroke-width="2.6" stroke-linecap="round"/></svg>
<svg class="a" style="left:12px;top:184px" width="27" height="16" viewBox="12 184 27 16"><path d="M18.3 185.5H36.8V197.8H18.3L13.3 191.7Z" fill="#f8e868" stroke="#d0ac10" stroke-width="1.1"/><text x="18.8" y="195" font-family="Liberation Sans" font-weight="bold" font-size="10.5" textLength="15.3" lengthAdjust="spacingAndGlyphs" fill="#2e2e2e">abc</text></svg>
<svg class="a" style="left:8px;top:217px" width="29" height="20" viewBox="8 217 29 20"><path d="M12 221.5Q12.5 219.5 16 220Q18.5 218.5 21 220.5Q24 218.5 27 220.5Q31 219.5 33 222Q35.5 225 33.5 229Q34.5 233 30 233.5Q22 234.8 12.5 233.5Q9 232 9.8 227.5Q9 223 12 221.5Z" fill="#f5f6ff" stroke="#e0e3f0" stroke-width="0.8"/><text x="11.8" y="230.8" font-family="Liberation Sans" font-weight="bold" font-size="12" textLength="20.5" lengthAdjust="spacingAndGlyphs" fill="#2a2b2d">abc</text></svg>
<svg class="a" style="left:8px;top:249px" width="28" height="30" viewBox="8 249 28 30"><path d="M10.5 258L21.5 251.5L33 258L21.5 264.8Z" fill="#f8a0a0" stroke="#d01818" stroke-width="1.1"/><path d="M10.3 258.5L21.3 265.3V276.5L10.3 270Z" fill="#88e038" stroke="#58a818" stroke-width="0.9"/><path d="M21.7 265.3L33 258.5V270L21.7 276.5Z" fill="#fde040" stroke="#e0b010" stroke-width="0.9"/></svg>
<svg class="a" style="left:8px;top:286px" width="28" height="30" viewBox="8 286 28 30"><circle cx="18.3" cy="296" r="7.4" fill="#00b050" stroke="#1a5a2a" stroke-width="0.6"/><path d="M18.3 296L11.6 292.8A7.4 7.4 0 0 1 24.8 292.5Z" fill="#f8c800"/><path d="M18.3 296L24.8 292.5A7.4 7.4 0 0 1 18.3 303.4Z" fill="#cc1010"/><rect x="19.6" y="304.4" width="4.2" height="8.6" fill="#f8c000"/><rect x="24.4" y="297.8" width="4.4" height="15.2" fill="#10a040" stroke="#145a2a" stroke-width="0.5"/><rect x="29.2" y="306" width="4.3" height="7" fill="#c81010" stroke="#5a1010" stroke-width="0.5"/></svg>
<svg class="a" style="left:8px;top:322px" width="28" height="28" viewBox="8 322 28 28"><rect x="10.3" y="324.3" width="23.2" height="23.5" fill="#e8e8e8" stroke="#7aa2d2" stroke-width="0.9"/><rect x="10.8" y="324.8" width="22.2" height="5.5" fill="#b8d4ee"/><path d="M13 327.5H31M13 332.5H31M13 336H31M13 339.5H31M13 343H31" stroke="#5f8fc8" stroke-width="1.1"/><rect x="15.3" y="323.2" width="6.5" height="25.7" fill="#ede4b8" stroke="#f8f070" stroke-width="1.1"/><circle cx="18.5" cy="328" r="0.9" fill="#fff"/></svg>
<svg class="a" style="left:8px;top:358px" width="28" height="28" viewBox="8 358 28 28"><rect x="10.5" y="360.5" width="23" height="23" fill="#e6e6e6" stroke="#6a9ad0" stroke-width="1"/><rect x="20.7" y="364.3" width="9" height="5.8" fill="#fff" stroke="#5a8ac8" stroke-width="0.9"/><rect x="20.7" y="373.5" width="9" height="5.8" fill="#fff" stroke="#5a8ac8" stroke-width="0.9"/><path d="M14 367.2H18M14 376.4H18" stroke="#2a4a6a" stroke-width="1.4"/></svg>
<svg class="a" style="left:8px;top:395px" width="28" height="26" viewBox="8 395 28 26"><defs><linearGradient id="gj" x1="0" x2="1"><stop offset="0" stop-color="#3d6ea8"/><stop offset="1" stop-color="#78a8d8"/></linearGradient></defs><circle cx="12" cy="408" r="2.9" fill="#6a98cc"/><path d="M16.5 408L34.3 397V419.3Z" fill="url(#gj)"/></svg>
<svg class="a" style="left:8px;top:430px" width="28" height="28" viewBox="8 430 28 28"><path d="M17 432.3H30L34.3 436.5V456H17Z" fill="#fcfcfc"/><path d="M30 432.3V436.5H34.3" fill="#ddd"/><defs><linearGradient id="gd" x1="0" x2="1"><stop offset="0" stop-color="#8a8a8a"/><stop offset="0.5" stop-color="#d0d0d0"/><stop offset="1" stop-color="#9a9a9a"/></linearGradient></defs><path d="M9.5 441.5V453Q9.5 456.5 17.7 456.5Q25.9 456.5 25.9 453V441.5Z" fill="url(#gd)"/><ellipse cx="17.7" cy="441.5" rx="8.2" ry="3" fill="#c8c8c8" stroke="#888" stroke-width="0.5"/><path d="M9.5 447.5Q17.7 451 25.9 447.5" fill="none" stroke="#777" stroke-width="0.7"/></svg>
<svg class="a" style="left:8px;top:465px" width="28" height="28" viewBox="8 465 28 28"><path d="M24.50 467.70L26.20 467.85L27.10 470.36L28.30 470.92L30.80 469.99L32.01 471.20L31.08 473.70L31.64 474.90L34.15 475.80L34.30 477.50L31.98 478.82L31.64 480.10L32.99 482.40L32.01 483.80L29.39 483.32L28.30 484.08L27.85 486.71L26.20 487.15L24.50 485.10L23.18 484.98L21.15 486.71L19.60 485.99L19.61 483.32L18.68 482.39L16.01 482.40L15.29 480.85L17.02 478.82L16.90 477.50L14.85 475.80L15.29 474.15L17.92 473.70L18.68 472.61L18.20 469.99L19.60 469.01L21.90 470.36L23.18 470.02Z" fill="#e4e4e4"/><circle cx="24.5" cy="477.5" r="6" fill="#5a8ed0" stroke="#3a6aa8" stroke-width="0.6"/><path d="M22.3 473.8L28.3 477.5L22.3 481.2Z" fill="#fff"/><path d="M13.50 483.90L14.46 484.01L14.93 485.23L15.56 485.62L16.86 485.52L17.37 486.33L16.72 487.47L16.80 488.20L17.69 489.16L17.37 490.07L16.08 490.26L15.56 490.78L15.37 492.07L14.46 492.39L13.50 491.50L12.77 491.42L11.63 492.07L10.82 491.56L10.92 490.26L10.53 489.63L9.31 489.16L9.20 488.20L10.28 487.47L10.53 486.77L10.14 485.52L10.82 484.84L12.07 485.23L12.77 484.98Z" fill="#dcdcdc"/><circle cx="13.5" cy="488.2" r="2.8" fill="#5a8ed0"/></svg>
<svg class="a" style="left:8px;top:502px" width="28" height="26" viewBox="8 502 28 26"><path d="M13.5 504.8H30.5Q33.5 504.8 33.5 508V517.5Q33.5 520.5 30.5 520.5H22L16.5 526L17.8 520.5H13.5Q10.5 520.5 10.5 517.5V508Q10.5 504.8 13.5 504.8Z" fill="#e6da8e" stroke="#c8a838" stroke-width="0.9"/><path d="M13.6 511.5Q13.8 507.8 17 507.6H22" fill="none" stroke="#fff" stroke-width="1.4"/></svg>
<svg class="a" style="left:8px;top:538px" width="28" height="28" viewBox="8 538 28 28"><path d="M31.8 541.3L23.5 551.5" stroke="#d8a048" stroke-width="2.8" stroke-linecap="round"/><path d="M18 548.5L26.5 557L17.5 563.5L11 556.5Z" fill="#e0b474"/><path d="M18.5 548L20.5 546.5L28 554.5L26.5 557Z" fill="#c8882a"/></svg>
<svg class="a" style="left:8px;top:574px" width="28" height="28" viewBox="8 574 28 28"><circle cx="21.8" cy="588" r="11.4" fill="#f0f0f0" stroke="#888" stroke-width="0.5"/><circle cx="31.40" cy="588.00" r="0.75" fill="#4a7ac0"/><circle cx="30.11" cy="592.80" r="0.75" fill="#4a7ac0"/><circle cx="26.60" cy="596.31" r="0.75" fill="#4a7ac0"/><circle cx="21.80" cy="597.60" r="0.75" fill="#4a7ac0"/><circle cx="17.00" cy="596.31" r="0.75" fill="#4a7ac0"/><circle cx="13.49" cy="592.80" r="0.75" fill="#4a7ac0"/><circle cx="12.20" cy="588.00" r="0.75" fill="#4a7ac0"/><circle cx="13.49" cy="583.20" r="0.75" fill="#4a7ac0"/><circle cx="17.00" cy="579.69" r="0.75" fill="#4a7ac0"/><circle cx="21.80" cy="578.40" r="0.75" fill="#4a7ac0"/><circle cx="26.60" cy="579.69" r="0.75" fill="#4a7ac0"/><circle cx="30.11" cy="583.20" r="0.75" fill="#4a7ac0"/><path d="M21.8 577.5V588L27 591.5" fill="none" stroke="#707070" stroke-width="1.3"/></svg>
<svg class="a" style="left:8px;top:610px" width="28" height="28" viewBox="8 610 28 28"><path d="M27.5 617.5Q26 614.8 21.5 614.8Q15.5 614.8 15.5 619Q15.5 622.5 21 623.3Q14 624 14 628.5Q14 633.3 21.5 633.3Q26.5 633.3 28.5 629.8" fill="none" stroke="#5e2e80" stroke-width="2.6" stroke-linecap="round"/><path d="M19.5 623.3H24.5" stroke="#5e2e80" stroke-width="1.6"/></svg>
<svg class="a" style="left:8px;top:645px" width="28" height="30" viewBox="8 645 28 30"><defs><linearGradient id="gy" x1="0" y1="0" x2="0" y2="1"><stop offset="0" stop-color="#fff080"/><stop offset="1" stop-color="#e8c400"/></linearGradient></defs><rect x="25" y="648" width="9" height="17" fill="url(#gy)" stroke="#c8a400" stroke-width="0.6"/><rect x="10" y="663" width="9" height="9" fill="url(#gy)" stroke="#c8a400" stroke-width="0.6"/><path d="M21.5 667V651M17.2 653.5L21.5 648.3L25.8 653.5M15.5 667.5H27.5" fill="none" stroke="#d8d8d8" stroke-width="3" stroke-linejoin="round"/><path d="M21.5 667V651M17.2 653.5L21.5 648.3L25.8 653.5M15.5 667.5H27.5" fill="none" stroke="#2a2b2d" stroke-width="1.7" stroke-linejoin="round"/></svg>
<svg class="a" style="left:8px;top:681px" width="28" height="30" viewBox="8 681 28 30"><path d="M13 683.5H27L32 688.5V708H13Z" fill="#fafafa" stroke="#ccc" stroke-width="0.5"/><path d="M27 683.5V688.5H32Z" fill="#d8d8d8"/><path d="M15.5 691.5H27M15.5 695H25M15.5 698.5H24M15.5 702H26M15.5 705H27" stroke="#9a9a9a" stroke-width="0.9"/><path d="M33.5 688L25.3 700.5" stroke="#e06a18" stroke-width="3.4"/><path d="M33.2 687.6L34.6 689" stroke="#f0c0a0" stroke-width="1.6"/><path d="M23.9 699.6L26.7 701.4L24 704Z" fill="#e8d8b0"/><path d="M24.3 702.5L24 704L25.2 703.2Z" fill="#333"/></svg>
<svg class="a" style="left:8px;top:718px" width="29" height="28" viewBox="8 718 29 28"><rect x="11.7" y="721.5" width="13.3" height="12.5" fill="#ececec"/><rect x="19.2" y="726.8" width="13.6" height="15.8" fill="#ececec"/><path d="M21.5 722.5H29.5V731H33.5L28 736.5L22.5 731H26V726H21.5Z" fill="#7aa8e0" stroke="#5a88c8" stroke-width="0.5"/><path d="M22 741.5H14V733H9.5L15 727.5L20.5 733H17V738H22Z" fill="#7aa8e0" stroke="#5a88c8" stroke-width="0.5"/></svg>
<svg class="a" style="left:8px;top:754px" width="28" height="26" viewBox="8 754 28 26"><rect x="11.3" y="757" width="6" height="6" fill="#ffd200" stroke="#d08000" stroke-width="0.6"/><rect x="11.3" y="764.6" width="6" height="5.8" fill="#ff4010" stroke="#a02000" stroke-width="0.6"/><rect x="11.3" y="771.8" width="6" height="5.5" fill="#10c050" stroke="#0a5a2a" stroke-width="0.6"/><path d="M18.5 762H25.5M18.5 769H29M18.5 776H23" stroke="#9a9a9a" stroke-width="1.3"/></svg>
<svg class="a" style="left:203px;top:243px" width="22" height="12" viewBox="203 243 22 12"><text x="204.6" y="251.3" font-family="Liberation Sans" font-weight="bold" font-size="10.3" fill="#3a3b3c" stroke="#3a3b3c" stroke-width="0.4">abc</text></svg>
<svg class="a" style="left:203px;top:261px" width="22" height="20" viewBox="203 261 22 20"><path d="M205.5 266H210.5M208 263.5V268.5" stroke="#888" stroke-width="1.1"/><text x="210.5" y="268.3" font-family="Liberation Sans" font-weight="bold" font-size="9" fill="#2a2b2c" stroke="#2a2b2c" stroke-width="0.35">ab</text><path d="M210 272L205.5 274.2L210 276.4" fill="none" stroke="#888" stroke-width="1"/><text x="216.3" y="277.8" font-family="Liberation Sans" font-weight="bold" font-size="9" fill="#2a2b2c" stroke="#2a2b2c" stroke-width="0.35">c</text></svg>
<svg class="a" style="left:202px;top:283px" width="24" height="16" viewBox="202 283 24 16"><rect x="203" y="285" width="20.5" height="12" rx="6" fill="#88a8f0"/><circle cx="211" cy="285.5" r="3" fill="#88a8f0"/><text x="205.3" y="294.8" font-family="Liberation Sans" font-weight="bold" font-size="10" fill="#2a2b3c" stroke="#2a2b3c" stroke-width="0.2">abc</text></svg>
<svg class="a" style="left:202px;top:305px" width="24" height="16" viewBox="202 305 24 16"><rect x="203.3" y="307.3" width="20" height="11.5" rx="5.7" fill="#eef0fa" stroke="#c8cce0" stroke-width="0.8"/><text x="205.3" y="316.8" font-family="Liberation Sans" font-weight="bold" font-size="10" fill="#2a2b3c" stroke="#2a2b3c" stroke-width="0.2">abc</text></svg>
<svg class="a" style="left:202px;top:326px" width="22" height="20" viewBox="202 326 22 20"><defs><clipPath id="cs"><path d="M204 331Q206 328.8 208.5 330Q211 328.5 213 329.8Q215 328.5 217.5 330Q220 328.8 222 331Q223.2 336 221.3 339.8Q218.5 344.3 213 344.6Q207.5 344.3 204.7 339.8Q202.8 336 204 331Z"/></clipPath></defs><path d="M204 331Q206 328.8 208.5 330Q211 328.5 213 329.8Q215 328.5 217.5 330Q220 328.8 222 331Q223.2 336 221.3 339.8Q218.5 344.3 213 344.6Q207.5 344.3 204.7 339.8Q202.8 336 204 331Z" fill="#1862b8"/><rect x="202" y="326" width="22" height="7.2" fill="#e02020" clip-path="url(#cs)"/></svg>
<svg class="a" style="left:202px;top:348px" width="24" height="20" viewBox="202 348 24 20"><path d="M204 331Q206 328.8 208.5 330Q211 328.5 213 329.8Q215 328.5 217.5 330Q220 328.8 222 331Q223.2 336 221.3 339.8Q218.5 344.3 213 344.6Q207.5 344.3 204.7 339.8Q202.8 336 204 331Z" transform="translate(1.6 23.4)" fill="#333"/><path d="M204 331Q206 328.8 208.5 330Q211 328.5 213 329.8Q215 328.5 217.5 330Q220 328.8 222 331Q223.2 336 221.3 339.8Q218.5 344.3 213 344.6Q207.5 344.3 204.7 339.8Q202.8 336 204 331Z" transform="translate(0 21.5)" fill="#eaeeff" stroke="#98a8e0" stroke-width="0.7"/></svg>
<svg class="a" style="left:202px;top:369px" width="22" height="22" viewBox="202 369 22 22"><text x="204.6" y="378.5" font-family="Liberation Sans" font-weight="bold" font-size="10.3" fill="#3a3b3c" stroke="#3a3b3c" stroke-width="0.4">abc</text><path d="M207 388.5L214 379.5" stroke="#2a2b2c" stroke-width="1.4"/></svg>
<svg class="a" style="left:202px;top:391px" width="22" height="22" viewBox="202 391 22 22"><path d="M213.0 393.0L216.8 396.8L214.4 396.8L214.4 399.2L211.6 399.2L211.6 396.8L209.2 396.8Z" fill="#6a8eaa"/><path d="M222.0 402.0L218.2 405.8L218.2 403.4L215.8 403.4L215.8 400.6L218.2 400.6L218.2 398.2Z" fill="#6a8eaa"/><path d="M213.0 411.0L209.2 407.2L211.6 407.2L211.6 404.8L214.4 404.8L214.4 407.2L216.8 407.2Z" fill="#6a8eaa"/><path d="M204.0 402.0L207.8 398.2L207.8 400.6L210.2 400.6L210.2 403.4L207.8 403.4L207.8 405.8Z" fill="#6a8eaa"/></svg>
<svg class="a" style="left:202px;top:414px" width="22" height="20" viewBox="202 414 22 20"><defs><linearGradient id="gr" x1="1" y1="0" x2="0" y2="1"><stop offset="0" stop-color="#b0b0b0"/><stop offset="0.6" stop-color="#7a7a7a"/><stop offset="1" stop-color="#3a3a3a"/></linearGradient></defs><path d="M204.5 431.8Q209.5 431.5 213.5 426Q218 420 221.2 415.8Q220 422.5 216.5 428Q212.5 433.2 204.5 431.8Z" fill="url(#gr)"/><path d="M211.5 426.5L214.8 423.5" stroke="#d8d8d8" stroke-width="1.2"/></svg>
<svg class="a" style="left:953px;top:40px" width="22" height="22" viewBox="953 40 22 22"><path d="M955.5 42.5H968.5L973 46L968.5 49.5H955.5Z" fill="#f8e050" stroke="#c8a800" stroke-width="0.9"/><circle cx="968" cy="46" r="0.9" fill="#333"/><path d="M962 49L967 57" stroke="#d0b868" stroke-width="2"/><path d="M957.5 44Q959 42.5 961 44L962.5 46Q963 48 961 48.5Q959 48.5 958 47Z" fill="#e0e0e0" stroke="#888" stroke-width="0.5"/></svg>
<svg class="a" style="left:983px;top:40px" width="22" height="22" viewBox="983 40 22 22"><path d="M986 46L990 42L995 46L991 50Z" fill="#2a5a8a"/><path d="M988 43.5L990 42L993 44.5" stroke="#8ab0d8" stroke-width="0.6" fill="none"/><path d="M995.50 45.70L996.63 45.81L997.11 47.62L997.83 48.01L999.60 47.40L1000.32 48.28L999.38 49.89L999.62 50.68L1001.30 51.50L1001.19 52.63L999.38 53.11L998.99 53.83L999.60 55.60L998.72 56.32L997.11 55.38L996.32 55.62L995.50 57.30L994.37 57.19L993.89 55.38L993.17 54.99L991.40 55.60L990.68 54.72L991.62 53.11L991.38 52.32L989.70 51.50L989.81 50.37L991.62 49.89L992.01 49.17L991.40 47.40L992.28 46.68L993.89 47.62L994.68 47.38Z" fill="#f8e030" stroke="#c8a800" stroke-width="0.8"/><circle cx="995.5" cy="51.5" r="1.7" fill="#fff"/></svg>
<svg class="a" style="left:983px;top:71px" width="22" height="22" viewBox="983 71 22 22"><path d="M996.5 77.8Q995.5 76.2 992.8 76.2Q989.2 76.2 989.2 78.8Q989.2 81 992.5 81.6Q988.5 82 988.5 84.6Q988.5 87.6 992.8 87.6Q995.8 87.6 997 85.5" fill="none" stroke="#6a2e7e" stroke-width="1.7" stroke-linecap="round"/></svg>
<svg class="a" style="left:739px;top:205px" width="20" height="20" viewBox="739 205 20 20"><path d="M741.8 213.3L747 207.8V218.6Z" fill="#e07a30"/><path d="M746 212.2Q753.3 211 753.5 215.5Q753.5 219.2 748.5 219.6" fill="none" stroke="#e07a30" stroke-width="3.3"/></svg>
<svg class="a" style="left:862px;top:205px" width="20" height="20" viewBox="862 205 20 20"><defs><linearGradient id="gm" x1="0" x2="1"><stop offset="0" stop-color="#3a5a8a"/><stop offset="0.35" stop-color="#a8c4e4"/><stop offset="1" stop-color="#d8d8d8"/></linearGradient></defs><rect x="864.3" y="207.8" width="15.2" height="9.8" fill="url(#gm)" stroke="#9a9a9a" stroke-width="0.6"/><path d="M864.3 207.8L865.5 207V216.8L864.3 217.6Z" fill="#c8c8c8"/><path d="M868.3 209.8L877.8 215.3L873.8 216.2L877 220.5L875.3 221.8L872.2 217.5L869.8 220.3Z" fill="#fff" stroke="#1a1a1a" stroke-width="0.8" stroke-linejoin="round"/></svg>
<svg class="a" style="left:212px;top:769px" width="16" height="16" viewBox="212 769 16 16"><path d="M214.6 771.2L225.6 782.2M225.6 771.2L214.6 782.2" stroke="#222" stroke-width="1.5"/><circle cx="220.1" cy="776.7" r="5.9" fill="#222"/><rect x="218.5" y="772.1" width="3.2" height="2.2" rx="0.6" fill="#f3f3f4"/><rect x="218.5" y="779.1" width="3.2" height="2.2" rx="0.6" fill="#f3f3f4"/><rect x="215.5" y="775.1" width="2.2" height="3.2" rx="0.6" fill="#f3f3f4"/><rect x="222.5" y="775.1" width="2.2" height="3.2" rx="0.6" fill="#f3f3f4"/><circle cx="220.1" cy="776.7" r="1.6" fill="#f3f3f4"/></svg>
<svg class="a" style="left:765px;top:771px" width="16" height="12" viewBox="765 771 16 12"><path d="M767 777L771 781L779 773" fill="none" stroke="#333" stroke-width="1.3"/></svg>
<svg class="a" style="left:834px;top:771px" width="16" height="12" viewBox="834 771 16 12"><path d="M836 777L840 781L848 773" fill="none" stroke="#333" stroke-width="1.3"/></svg>
<svg class="a" style="left:931px;top:771px" width="15" height="15" viewBox="931 771 15 15"><circle cx="938" cy="778" r="5.5" fill="none" stroke="#333" stroke-width="1.2"/><path d="M934.2 774.2L941.8 781.8" stroke="#333" stroke-width="1.2"/></svg>
<svg class="a" style="left:356px;top:736px" width="16" height="16" viewBox="356 736 16 16"><rect x="357.5" y="737.5" width="13" height="13" fill="#eaf2fb" stroke="#a8c4e4" stroke-width="0.8"/><rect x="359.3" y="739.3" width="2" height="2" fill="#4a88d0"/><rect x="359.3" y="743.1" width="2" height="2" fill="#4a88d0"/><rect x="359.3" y="746.9" width="2" height="2" fill="#4a88d0"/><rect x="363.1" y="739.3" width="2" height="2" fill="#4a88d0"/><rect x="363.1" y="743.1" width="2" height="2" fill="#4a88d0"/><rect x="363.1" y="746.9" width="2" height="2" fill="#4a88d0"/><rect x="366.9" y="739.3" width="2" height="2" fill="#4a88d0"/><rect x="366.9" y="743.1" width="2" height="2" fill="#4a88d0"/><rect x="366.9" y="746.9" width="2" height="2" fill="#4a88d0"/></svg>
<svg class="a" style="left:379px;top:735px" width="18" height="18" viewBox="379 735 18 18"><rect x="381.5" y="737.5" width="13" height="13" fill="#eaf2fb" stroke="#8ab4e0" stroke-width="0.8"/><rect x="382" y="738" width="12" height="3" fill="#a8c8ec"/><path d="M383.5 743.5H385M383.5 746H385M383.5 748.5H385M386.5 743.5H393M386.5 746H393M386.5 748.5H393" stroke="#6a9ad4" stroke-width="1"/></svg>
<svg class="a" style="left:977px;top:531px" width="20" height="20" viewBox="977 531 20 20"><circle cx="982.5" cy="537" r="2.8" fill="#e06a28"/><rect x="979.8" y="541.5" width="5.5" height="6" fill="#7ab87a"/><path d="M987.5 539.5L993 534" stroke="#3a6aa8" stroke-width="1.5"/><text x="987.5" y="546.5" font-family="Liberation Sans" font-size="8" fill="#555">a</text></svg>
<svg class="a" style="left:924px;top:534px" width="18" height="14" viewBox="924 534 18 14"><path d="M929.5 536.5H939.5V545.5H929.5L925.5 541Z" fill="#9a9b9d"/><path d="M931.5 538.5L936.5 543.5M936.5 538.5L931.5 543.5" stroke="#fff" stroke-width="1.3"/></svg>
</body></html>
